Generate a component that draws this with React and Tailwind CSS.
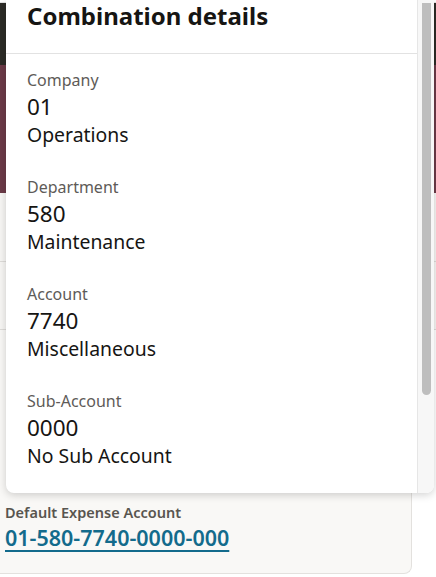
import React from 'react';

const segments = [
    { label: 'Company', code: '01', name: 'Operations' },
    { label: 'Department', code: '580', name: 'Maintenance' },
    { label: 'Account', code: '7740', name: 'Miscellaneous' },
    { label: 'Sub-Account', code: '0000', name: 'No Sub Account' },
];

const Segment = ({ label, code, name }) => (
    <div className="flex flex-col">
        <span className="text-[16px] leading-[22px] text-[#5e5b58]">{label}</span>
        <span className="mt-[3px] text-[22.5px] leading-[26px] text-[#161513]">{code}</span>
        <span className="mt-[2px] text-[19.4px] leading-[26px] text-[#161513]">{name}</span>
    </div>
);

const App = () => {
    return (
        <div className="relative h-[577px] w-[436px] overflow-hidden bg-white font-['Noto_Sans',sans-serif]">
            {/* page behind the popup */}
            <div className="flex h-full flex-col">
                <div className="h-[3px] border-b border-[#e4e4e4] bg-white" />
                <div className="h-[62px] bg-[#2c2b26]" />
                <div className="h-[128px] bg-[#6b3a47]" />
                <div className="h-[69px] border-b border-[#dedcd9] bg-[#f7f6f4]" />
                <div className="h-[68px] border-b border-[#dedcd9] bg-[#f7f6f4]" />
                <div className="flex flex-1 flex-col bg-white pb-[3px]">
                    <div className="flex flex-1 flex-col justify-end rounded-br-[8px] border-r border-b border-[#e3e1de] bg-[#f9f8f6] pb-[22px] w-[412px] pl-[5px]">
                        <span className="text-[14.5px] leading-[20px] font-semibold text-[#58554f]">
                            Default Expense Account
                        </span>
                        <a
                            href="#"
                            className="mt-[3px] text-[21.5px] leading-[26px] font-semibold text-[#136b8c] underline decoration-[2px] underline-offset-[4px]"
                        >
                            01-580-7740-0000-000
                        </a>
                    </div>
                </div>
            </div>

            {/* combination details popup */}
            <div className="absolute left-[6px] top-0 flex h-[493px] w-[428px] overflow-hidden rounded-b-[8px] bg-white shadow-[0_2px_8px_rgba(0,0,0,0.18)]">
                <div className="flex w-[411px] flex-col">
                    <div className="flex h-[54px] items-start border-b border-[#e2e2e2] px-[21px]">
                        <h2 className="-mt-[2px] text-[24px] leading-[36px] font-bold text-[#161513]">
                            Combination details
                        </h2>
                    </div>
                    <div className="flex flex-col gap-[28px] px-[21px] pt-[15px]">
                        {segments.map((s) => (
                            <Segment key={s.label} {...s} />
                        ))}
                    </div>
                </div>
                <div className="flex w-[17px] justify-center border-l border-[#e6e6e6] bg-[#f7f7f7] pt-[3px]">
                    <div className="h-[392px] w-[9px] rounded-b-full bg-[#bebebe]" />
                </div>
            </div>
        </div>
    );
};

export default App;
